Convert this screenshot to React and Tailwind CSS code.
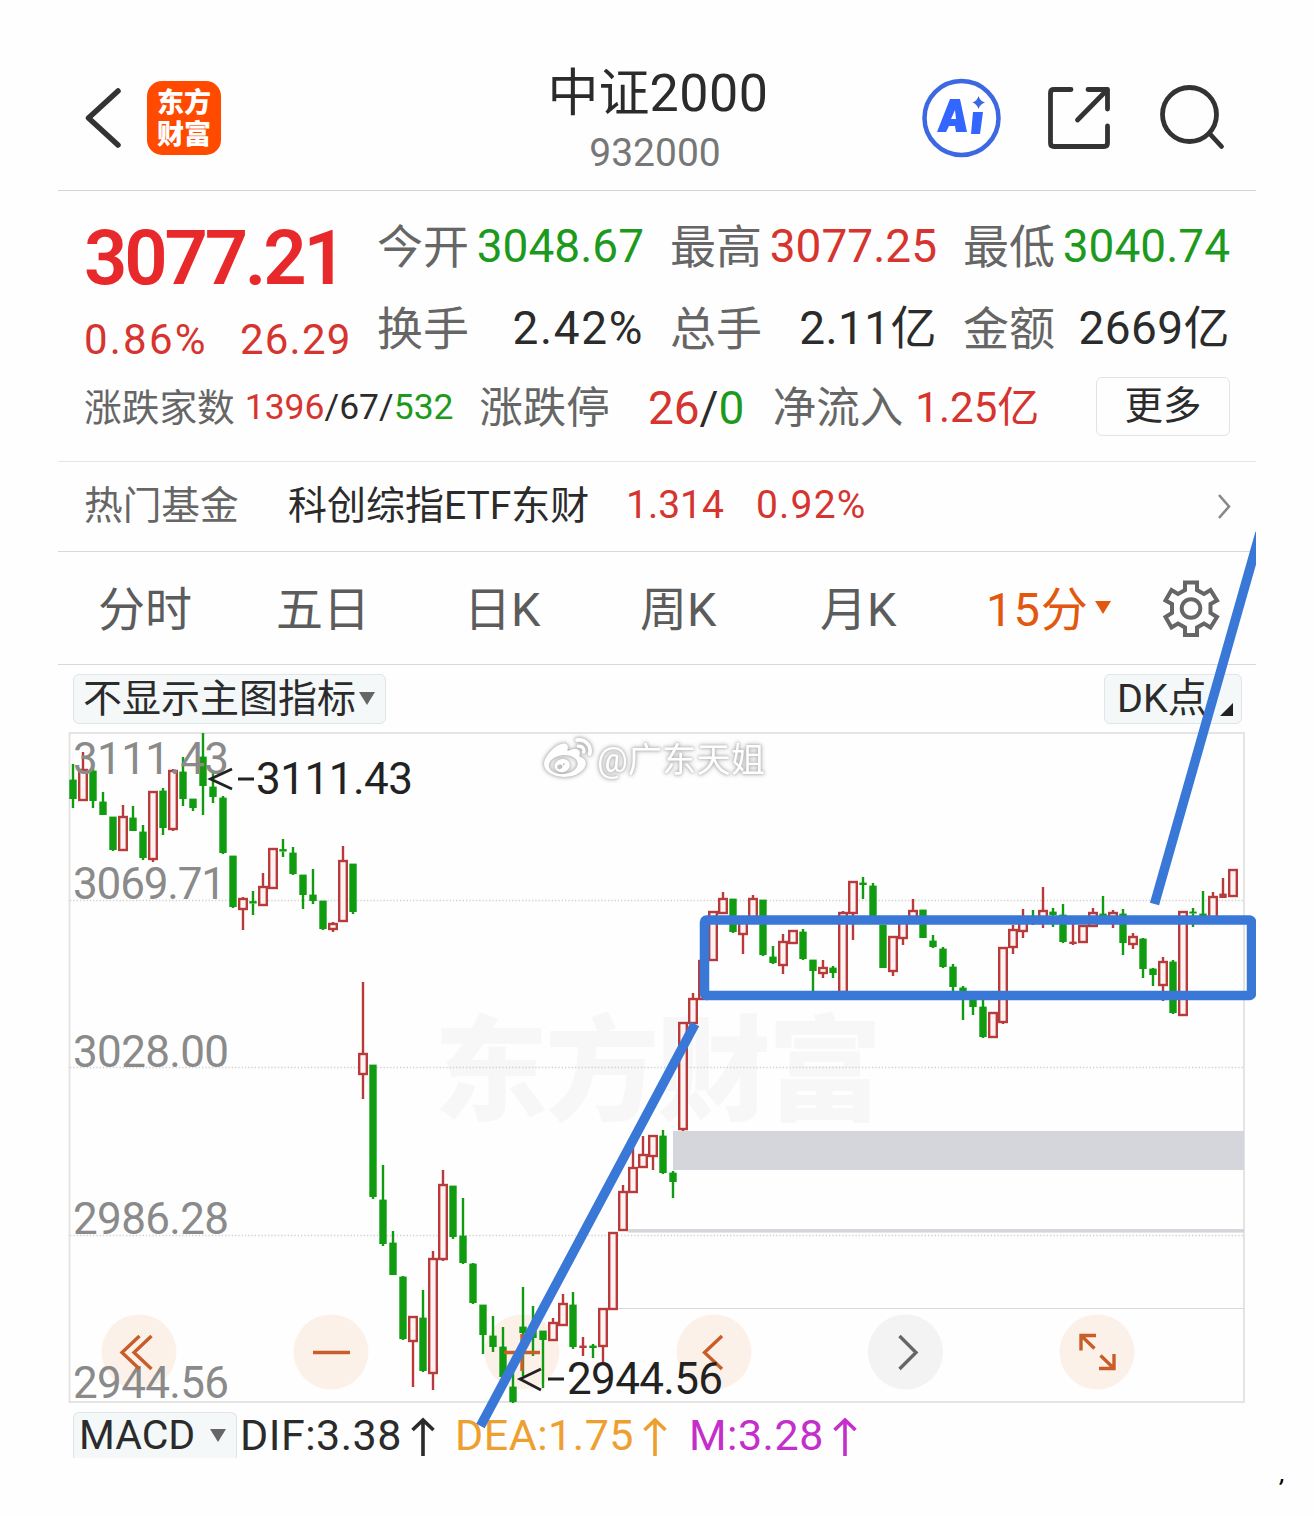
import React from "react";
import { FaWeibo } from "react-icons/fa";

const RED = "#b83a3a";
const GREEN = "#109b10";

// [direction, body top, body bottom, high, low]; one candle every 10px
const candles = [
  ["g", 780, 799, 764, 808], ["r", 770, 800, 752, 800], ["g", 771, 801, 768, 808], ["g", 802, 815, 792, 815],
  ["g", 817, 850, 817, 851], ["r", 817, 850, 805, 850], ["g", 818, 831, 806, 831], ["g", 832, 858, 825, 860],
  ["r", 792, 859, 792, 862], ["g", 791, 828, 788, 835], ["r", 771, 829, 769, 831], ["g", 772, 799, 757, 806],
  ["g", 799, 808, 799, 811], ["g", 757, 786, 733, 815], ["g", 787, 797, 773, 803], ["g", 798, 853, 796, 854],
  ["g", 856, 907, 856, 908], ["r", 899, 909, 897, 930], ["g", 901.5, 903.5, 891, 915], ["r", 887, 905, 873, 905],
  ["r", 849, 888, 849, 888], ["g", 849.5, 851.5, 839, 857], ["g", 853, 874, 847, 875], ["g", 875, 895, 875, 909],
  ["g", 895, 901, 869, 904], ["g", 901, 929, 901, 930], ["r", 924, 929, 922, 932], ["r", 861, 921, 846, 921],
  ["g", 864, 912, 864, 914], ["r", 1054, 1074, 982, 1099], ["g", 1065, 1197, 1065, 1199], ["g", 1200, 1244, 1165, 1246],
  ["g", 1243, 1275, 1231, 1275], ["g", 1277, 1339, 1276, 1340], ["r", 1317, 1341, 1317, 1387], ["g", 1318, 1371, 1290, 1372],
  ["r", 1259, 1373, 1251, 1390], ["r", 1185, 1259, 1170, 1261], ["g", 1186, 1237, 1186, 1239], ["g", 1236, 1263, 1198, 1264],
  ["g", 1264, 1303, 1263, 1304], ["g", 1305, 1335, 1305, 1354], ["g", 1336, 1347, 1316, 1352], ["g", 1347, 1377, 1327, 1378],
  ["g", 1387, 1402, 1370, 1403], ["g", 1327, 1333, 1287, 1376], ["g", 1331, 1338, 1306, 1356], ["g", 1331, 1340, 1331, 1388],
  ["r", 1323, 1340, 1318, 1341], ["r", 1304, 1325, 1294, 1326], ["g", 1305, 1347, 1292, 1349], ["r", 1346, 1348, 1337, 1356],
  ["g", 1346, 1348, 1344, 1358], ["r", 1309, 1346, 1309, 1362], ["r", 1233, 1309, 1233, 1309], ["r", 1192, 1230, 1185, 1230],
  ["r", 1168, 1192, 1148, 1192], ["r", 1155, 1167, 1136, 1167], ["r", 1136, 1156, 1136, 1170], ["g", 1136, 1173, 1130, 1174],
  ["g", 1173, 1182, 1171, 1198], ["r", 1023, 1129, 1023, 1131], ["r", 999, 1023, 993, 1023], ["r", 961, 999, 961, 999],
  ["r", 912, 960, 912, 960], ["r", 899, 913, 892, 913], ["g", 899, 932, 899, 933], ["r", 920, 934, 920, 954],
  ["r", 899, 922, 895, 922], ["g", 900, 955, 900, 956], ["g", 957, 963, 946, 964], ["r", 942, 965, 934, 974],
  ["r", 931, 943, 930, 943], ["g", 932, 959, 929, 960], ["g", 960, 971, 960, 992], ["r", 968, 973, 960, 978],
  ["g", 968, 973, 966, 978], ["r", 913, 992, 911, 992], ["r", 882, 913, 882, 940], ["g", 883, 885, 877, 899],
  ["g", 886, 920, 883, 920], ["g", 925, 968, 925, 968], ["r", 937, 971, 937, 976], ["r", 920, 938, 920, 945],
  ["r", 911, 920, 899, 920], ["g", 910, 938, 910, 938], ["g", 941, 947, 935, 948], ["g", 949, 967, 947, 968],
  ["g", 967, 987, 964, 992], ["g", 988, 992, 986, 1020], ["g", 1000, 1007, 1000, 1015], ["g", 1007, 1037, 1000, 1038],
  ["r", 1013, 1037, 1012, 1038], ["r", 948, 1022, 948, 1024], ["r", 930, 947, 925, 954], ["r", 922, 931, 909, 938],
  ["g", 918, 923, 910, 925], ["r", 911, 920, 887, 928], ["g", 912, 915, 908, 927], ["g", 915, 942, 904, 943],
  ["r", 942, 944, 922, 945], ["r", 926, 942, 926, 942], ["r", 913, 926, 908, 926], ["g", 914, 917, 896, 920],
  ["r", 913, 918, 910, 928], ["g", 914, 943, 909, 955], ["r", 937, 944, 933, 949], ["g", 939, 969, 938, 978],
  ["g", 969, 975, 968, 986], ["r", 962, 985, 957, 1001], ["g", 962, 1013, 960, 1014], ["r", 912, 1015, 912, 1016],
  ["g", 912, 913.5, 908, 927], ["g", 914, 917, 891, 918], ["r", 897, 918, 892, 918], ["r", 894, 898, 878, 898],
  ["r", 870, 896, 870, 896],
];

function Candle({ x, d }) {
  const [dir, top, bottom, high, low] = d;
  const color = dir === "g" ? GREEN : RED;
  const thin = bottom - top < 4.5;
  return (
    <g stroke={color} strokeWidth="2.4" fill="none">
      <path d={`M${x} ${high}V${top}M${x} ${bottom}V${low}`} />
      {dir === "g" || thin ? (
        <rect x={x - 3.7} y={top - 0.4} width="7.4" height={Math.max(1.2, bottom - top + 0.4)} fill={color} stroke="none" />
      ) : (
        <rect x={x - 3.8} y={top} width="7.6" height={bottom - top} fill="#fff2f0" />
      )}
    </g>
  );
}

function SvgText({ x, y, w, size = 44, fill = "#8a8a8a", children }) {
  return (
    <text x={x} y={y} textLength={w} fontSize={size} fill={fill}>
      {children}
    </text>
  );
}

function Round({ x, gray }) {
  return <circle cx={x} cy="1352" r="37.5" fill={gray ? "#f3f3f3" : "#fcf1e9"} />;
}

function Chart() {
  return (
    <svg className="block" width="1198" height="680" viewBox="58 729 1198 680">
      <text x="434" y="1111" textLength="448" fontSize="114" fontWeight="900" fill="#f7f7f7">东方财富</text>
      <Round x={139} />
      <Round x={331} />
      <Round x={522} />
      <Round x={714} />
      <Round x={905.5} gray />
      <Round x={1097} />
      <g stroke="#cfcfcf" strokeWidth="1.3" strokeDasharray="1.3 2">
        <path d="M70 900.5H1244M70 1067.5H1244M70 1235.5H1244" />
      </g>
      <rect x="69.5" y="733" width="1174.5" height="669" fill="none" stroke="#e2e2e2" strokeWidth="1.8" />
      <rect x="673" y="1131" width="571" height="39" fill="#d5d6dc" />
      <rect x="628" y="1229" width="616" height="3.6" fill="#d5d6dc" />
      <path d="M617 1308.5H1244" stroke="#d8d8d8" strokeWidth="1.2" />
      <g>{candles.map((d, i) => <Candle key={i} x={73 + i * 10} d={d} />)}</g>
      <SvgText x={73} y={774} w={156}>3111.43</SvgText>
      <SvgText x={73} y={899} w={153}>3069.71</SvgText>
      <SvgText x={73} y={1067} w={156}>3028.00</SvgText>
      <SvgText x={73} y={1234} w={156}>2986.28</SvgText>
      <SvgText x={73} y={1398} w={156}>2944.56</SvgText>
      <g fill="none" stroke="#c95d2a" strokeWidth="3.4">
        <path d="M139.500 1336L122 1352.500L139.500 1369M151.500 1336L134 1352.500L151.500 1369" />
        <path d="M313 1352.500H350M504 1352.500H540M522 1334V1371" />
        <path d="M722 1336L704.500 1352.500L722 1369" />
        <path d="M1096 1335.500H1081V1350.500M1081 1335.500L1094.500 1348.500M1099 1368.500H1114V1354M1114 1368.500L1100.500 1355.500" />
      </g>
      <path d="M899.500 1336L916 1352.500L899.500 1369" fill="none" stroke="#666" strokeWidth="3.4" />
      <g fill="none" stroke="#222" strokeWidth="2.8">
        <path d="M232 769L210.500 779L232 789M238 779H254M541 1369L520 1379L541 1390M548 1379H564" />
      </g>
      <SvgText x={256} y={794} w={157} fill="#222">3111.43</SvgText>
      <SvgText x={567} y={1394} w={156} fill="#222">2944.56</SvgText>
    </svg>
  );
}

function Stat({ label, value, unit, color, spacing = "" }) {
  return (
    <div className="flex w-[267px] items-center justify-between whitespace-nowrap">
      <span className="pt-[2px] text-[46px] text-[#666]">{label}</span>
      <span className={`text-[46px] ${color} ${spacing}`}>
        {value}
        {unit}
      </span>
    </div>
  );
}

const red = "text-[#d6342f]";
const green = "text-[#1d9a1d]";
const dark = "text-[#2b2b2b]";

export default function App() {
  return (
    <div className="relative h-[1516px] w-[1314px] overflow-hidden bg-[#fefefe] px-[58px] pt-[50px] font-[Roboto,'Noto_Sans_CJK_SC',sans-serif] leading-none">
      <header className="flex h-[141px] items-center border-b border-[#d4d4d4] pl-[26px]">
        <svg className="-mt-1 mr-[23px] shrink-0" width="40" height="64" viewBox="84 86 40 64" fill="none" stroke="#333" strokeWidth="5.5" strokeLinecap="round" strokeLinejoin="round">
          <path d="M118 91L88.500 118L118 145" />
        </svg>
        <div className="-mt-1 flex h-[74px] w-[74px] shrink-0 flex-col items-center justify-center rounded-[15px] bg-[#ff4a00] pt-[1px] text-[27px] leading-[32px] font-black text-white">
          <span>东方</span>
          <span>财富</span>
        </div>
        <div className="ml-[327px] flex w-[220px] shrink-0 flex-col items-center">
          <div className={"flex items-center text-[52px] leading-[64px] whitespace-nowrap " + dark}>
            <span className="pt-[3px] text-[51px]">中证</span>
            <span className="pt-[3px] tracking-[0.500px]">2000</span>
          </div>
          <div className="-mt-[1px] pr-[6px] text-[39px] leading-[56px] text-[#777]">932000</div>
        </div>
        <div className="-mt-1 ml-[154px] flex shrink-0 items-center">
          <svg width="80" height="80" viewBox="922 78 80 80">
            <circle cx="961.500" cy="118" r="37" fill="#fff" stroke="#3c68e2" strokeWidth="4.500" />
            <path fillRule="evenodd" fill="#3366ff" d="M950 99H960L967 132H956L955 126H949L946 132H937ZM955 110L951 119H956Z" />
            <path fill="#3366ff" d="M973 112H983L980 134H971Z" />
            <path fill="#3c68e2" d="M978.500 96Q980 101 985 102.500Q980 104 978.500 109Q977 104 972.500 102.500Q977 101 978.500 96Z" />
          </svg>
          <svg className="ml-[44px]" width="66" height="66" viewBox="1046 85 66 66" fill="none" stroke="#333" strokeWidth="4.800" strokeLinecap="round" strokeLinejoin="round">
            <path d="M1071 89.500H1054Q1050.500 89.500 1050.500 93V143Q1050.500 146.500 1054 146.500H1104Q1107.500 146.500 1107.500 143V126M1088 89.500H1107.500V109M1107.500 89.500L1077.500 120" />
          </svg>
          <svg className="ml-[47px]" width="68" height="68" viewBox="1159 84 68 68" fill="none" stroke="#333" strokeWidth="4.800" strokeLinecap="round">
            <circle cx="1189.500" cy="114.500" r="27" />
            <path d="M1210 134L1221.500 146.500" />
          </svg>
        </div>
      </header>

      <section className="h-[271px] border-b border-[#e6e6e6] px-[26px]">
        <div className="flex pt-[14px]">
          <div className="w-[294px] whitespace-nowrap">
            <div className="h-[106px] text-[76px] leading-[106px] font-semibold tracking-[-3.2px] text-[#e8292b]">3077.21</div>
            <div className={"flex h-[58px] items-center text-[42px] " + red}>
              <span className="w-[156px] tracking-[2.2px]">0.86%</span>
              <span className="tracking-[1.2px]">26.29</span>
            </div>
          </div>
          <div className="grid grid-cols-[267px_267px_267px] grid-rows-[82px_82px] gap-x-[26px]">
            <Stat label="今开" value="3048.67" color={green} />
            <Stat label="最高" value="3077.25" color={red} />
            <Stat label="最低" value="3040.74" color={green} />
            <Stat label="换手" value="2.42%" color={dark} spacing="tracking-[1.6px]" />
            <Stat label="总手" value="2.11" unit="亿" color={dark} spacing="tracking-[0.4px]" />
            <Stat label="金额" value="2669" unit="亿" color={dark} spacing="tracking-[0.4px]" />
          </div>
        </div>
        <div className="flex h-[76px] items-center whitespace-nowrap">
          <span className="w-[161px] pt-[3px] text-[37.700px] text-[#666]">涨跌家数</span>
          <span className={"w-[235px] pt-[1px] text-[35.500px] " + dark}>
            <span className={red}>1396</span>/67/<span className={green}>532</span>
          </span>
          <span className="w-[169px] pt-[4px] text-[43.500px] text-[#666]">涨跌停</span>
          <span className={"w-[125px] pt-[2px] text-[46px] " + dark}>
            <span className={red}>26</span>/<span className={green}>0</span>
          </span>
          <span className="w-[143px] pt-[4px] text-[43.500px] text-[#666]">净流入</span>
          <span className={"w-[181px] pt-[2px] text-[42px] " + red}>1.25亿</span>
          <span className={"-mt-[2px] flex h-[59px] w-[134px] shrink-0 items-center justify-center rounded-md border-[1.5px] border-[#e3e3e3] pt-[1px] text-[38.500px] " + dark}>更多</span>
        </div>
      </section>

      <section className="flex h-[90px] items-center border-b border-[#d8d8d8] pl-[26px] text-[39px] whitespace-nowrap">
        <span className="w-[204px] text-[38.700px] text-[#666]">热门基金</span>
        <span className={"w-[338px] " + dark}>科创综指ETF东财</span>
        <span className={"w-[130px] -mt-[2px] " + red}>1.314</span>
        <span className={"w-[461px] -mt-[2px] tracking-[1.2px] " + red}>0.92%</span>
        <svg width="16" height="28" viewBox="0 0 16 28" fill="none" stroke="#888" strokeWidth="2.600">
          <path d="M2 2L12 13.500L2 25" />
        </svg>
      </section>

      <nav className="flex h-[113px] items-center border-b border-[#d8d8d8] pl-[40px] text-[47px] whitespace-nowrap text-[#5c5c5c]">
        <span className="w-[178px] pt-[2px]">分时</span>
        <span className="w-[188px] pt-[2px]">五日</span>
        <span className="w-[176px] pt-[2px]">日K</span>
        <span className="w-[180px] pt-[2px]">周K</span>
        <span className="w-[166px] pt-[2px]">月K</span>
        <span className="w-[109px] pt-[2px] tracking-[1px] text-[#e2580f]">15分</span>
        <svg width="16" height="14" viewBox="0 0 16 14"><path d="M0 0H16L8 13Z" fill="#e2580f" /></svg>
        <svg className="ml-[51px]" width="58" height="58" viewBox="1162 578 58 58" fill="none" stroke="#666" strokeWidth="4">
          <path d="M1185 581.500H1197V589L1204 593L1210.500 589L1217 599.500L1210.500 603V612L1217 616L1210.500 626.500L1204 622.500L1197 626.500V634H1185V626.500L1178 622.500L1171.500 626.500L1165.500 616L1172 612V603L1165.500 599.500L1171.500 589L1178 593L1185 589Z" />
          <circle cx="1191" cy="607.500" r="9.300" />
        </svg>
      </nav>

      <div className="flex h-[64px] items-center justify-between pt-[3px] pr-[14px] pl-[15px]">
        <div className={"flex h-[50px] w-[313px] items-center rounded-md border-[1.5px] border-[#e0e5e8] bg-[#f4f8f9] pl-[9px] text-[39px] whitespace-nowrap " + dark}>
          <span className="pt-[2px]">不显示主图指标</span>
          <svg className="ml-[3px] shrink-0" width="16" height="14" viewBox="0 0 16 14"><path d="M0 0H16L8 13Z" fill="#666" /></svg>
        </div>
        <div className={"flex h-[50px] w-[138px] items-center rounded-md border-[1.5px] border-[#e0e5e8] bg-[#f4f8f9] pl-[12px] text-[39.500px] whitespace-nowrap " + dark}>
          <span className="pt-[1px]">DK点</span>
          <svg className="mt-[22px] ml-[13px] shrink-0" width="13" height="13" viewBox="0 0 13 13"><path d="M13 0V13H0Z" fill="#222" /></svg>
        </div>
      </div>

      <Chart />

      <div className="flex h-[49px] items-start pt-[3px] pl-[15px] text-[43px] whitespace-nowrap">
        <div className={"flex h-[46px] w-[164px] shrink-0 items-center rounded-t-md border-[1.5px] border-b-0 border-[#dfe4e6] bg-[#f4f8f9] pl-[5px] text-[41px] " + dark}>
          <span className="w-[131px]">MACD</span>
          <svg className="shrink-0" width="16" height="14" viewBox="0 0 16 14"><path d="M0 0H16L8 13Z" fill="#666" /></svg>
        </div>
        <Indicator text="DIF:3.38" color={dark} width="w-[215px]" pad="pl-[3px]" />
        <Indicator text="DEA:1.75" color="text-[#eda02f]" width="w-[237px]" pad="pl-[3px]" />
        <Indicator text="M:3.28" color="text-[#c42fcb]" width="w-[174px]" pad="pl-0" />
      </div>

      <div className="mt-[6px] -mr-[40px] flex justify-end pr-[11px] text-[20px] font-bold text-black italic">,</div>

      <div className="absolute top-[735px] left-[544px] flex items-center text-[34.300px] whitespace-nowrap text-white [filter:drop-shadow(0_0_1px_#bbb)_drop-shadow(0_0_2px_#aaa)]">
        <FaWeibo size={48} />
        <span className="ml-[5px] pt-[3px]">@广东天姐</span>
      </div>

      <svg className="pointer-events-none absolute top-0 left-0" width="1256" height="1516" viewBox="0 0 1256 1516" fill="none" stroke="#3a78d8" strokeWidth="9.500">
        <path d="M1260 533L1154.500 904M695 1024L480.500 1426" />
        <rect x="704.500" y="920" width="547" height="75.500" rx="2" />
      </svg>
    </div>
  );
}

function Indicator({ text, color, width, pad }) {
  return (
    <div className={`flex h-[46px] shrink-0 items-center tracking-[0.5px] ${width} ${pad} ${color}`}>
      <span>{text}</span>
      <svg className="mt-[4px] ml-[9px] shrink-0" width="24" height="40" viewBox="0 0 24 40" fill="none" stroke="currentColor" strokeWidth="3.600">
        <path d="M12 39V3M1.500 13L12 3L22.500 13" />
      </svg>
    </div>
  );
}
